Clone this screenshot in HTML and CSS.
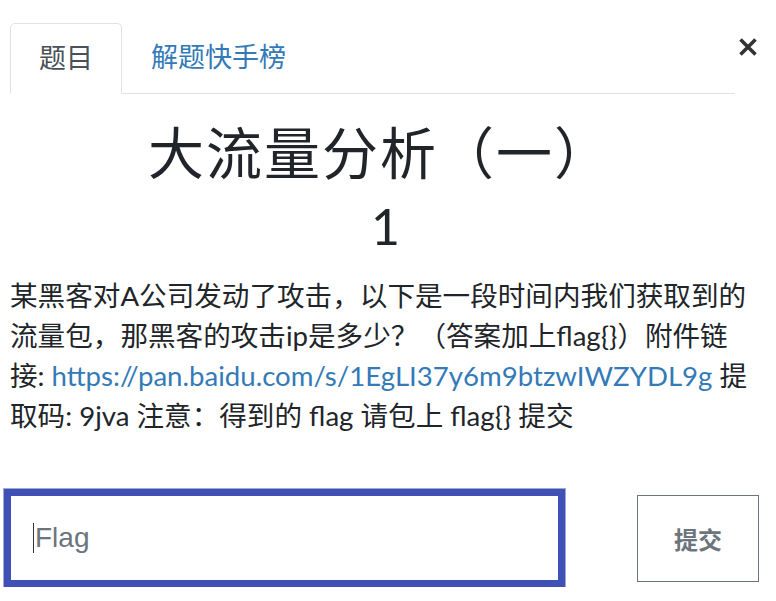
FILE: index.html
```html
<!DOCTYPE html>
<html lang="zh">
<head>
<meta charset="utf-8">
<link rel="stylesheet" href="styles.css">
</head>
<body>
<div class="modal">
  <div class="header">
    <ul class="tabs">
      <li class="tab active">题目</li>
      <li class="tab link">解题快手榜</li>
    </ul>
    <button class="close" aria-label="Close">
      <svg width="20" height="20" viewBox="0 0 20 20"><path d="M2.5 2.5 L17.5 17.5 M17.5 2.5 L2.5 17.5" stroke="#333" stroke-width="3.6" stroke-linecap="butt"/></svg>
    </button>
  </div>
  <h2 class="title">大流量分析（一）</h2>
  <h3 class="value">1</h3>
  <p class="desc">某黑客对A公司发动了攻击，以下是一段时间内我们获取到的流量包，那黑客的攻击ip是多少？（答案加上flag{}）附件链接: <a class="lnk">https://pan.baidu.com/s/1EgLI37y6m9btzwIWZYDL9g</a> 提取码: 9jva 注意：得到的 flag 请包上 flag{} 提交</p>
  <div class="submit-row">
    <div class="input"><span class="caret"></span><span class="ph">Flag</span></div>
    <button class="btn">提交</button>
  </div>
</div>
</body>
</html>
```
FILE: styles.css
```css
html, body { margin: 0; padding: 0; background: #fff; }
body { font-family: Lato, "Noto Sans CJK SC", sans-serif; color: #212529; text-spacing-trim: space-all; }
.modal { width: 776px; }
.header { display: flex; align-items: flex-start; padding-top: 23px; }
.tabs { list-style: none; margin: 0 0 0 10px; padding: 0; display: flex; width: 725px; border-bottom: 1px solid #dee2e6; height: 70px; }
.tab { font-size: 27px; line-height: 40px; padding: 14px 28px 15px 28px; }
.tab.active { border: 1px solid #dee2e6; border-bottom-color: #fff; border-radius: 5px 5px 0 0; color: #495057; background: #fff; margin-bottom: -1px; height: 40px; }
.tab.link { color: #337ab7; padding-left: 29px; }
.close { border: 0; background: none; padding: 0; margin: 14px 0 0 3px; width: 20px; height: 20px; }
.close svg { display: block; }
.title { margin: 26px 0 0 0; text-align: center; width: 760px; font-size: 56px; letter-spacing: 2px; line-height: 66px; font-weight: 400; color: #212529; }
.value { margin: 10px 0 0 0; text-align: center; width: 771px; font-size: 50px; line-height: 60px; font-weight: 400; }
.desc { margin: 20px 0 0 10px; width: 745px; font-size: 27.6px; line-height: 40px; color: #212529; }
.lnk { color: #337ab7; text-decoration: none; }
.submit-row { display: flex; align-items: center; margin-top: 53px; padding-left: 4px; }
.input { box-sizing: border-box; width: 561px; height: 98px; border: 7px solid #3f51b5; box-shadow: 0 0 0 1px rgba(63,81,181,0.5); display: flex; align-items: center; padding-left: 22px; }
.caret { width: 1px; height: 30px; background: #333; margin-right: 1px; }
.ph { font-family: "Liberation Sans", Arial, sans-serif; font-size: 28px; color: #6c757d; }
.btn { box-sizing: border-box; margin-left: 72px; width: 122px; height: 87px; border: 1px solid #6c757d; background: #fff; color: #6c757d; font-family: "Noto Sans CJK SC", sans-serif; font-weight: 700; font-size: 24px; padding: 0; }
```
